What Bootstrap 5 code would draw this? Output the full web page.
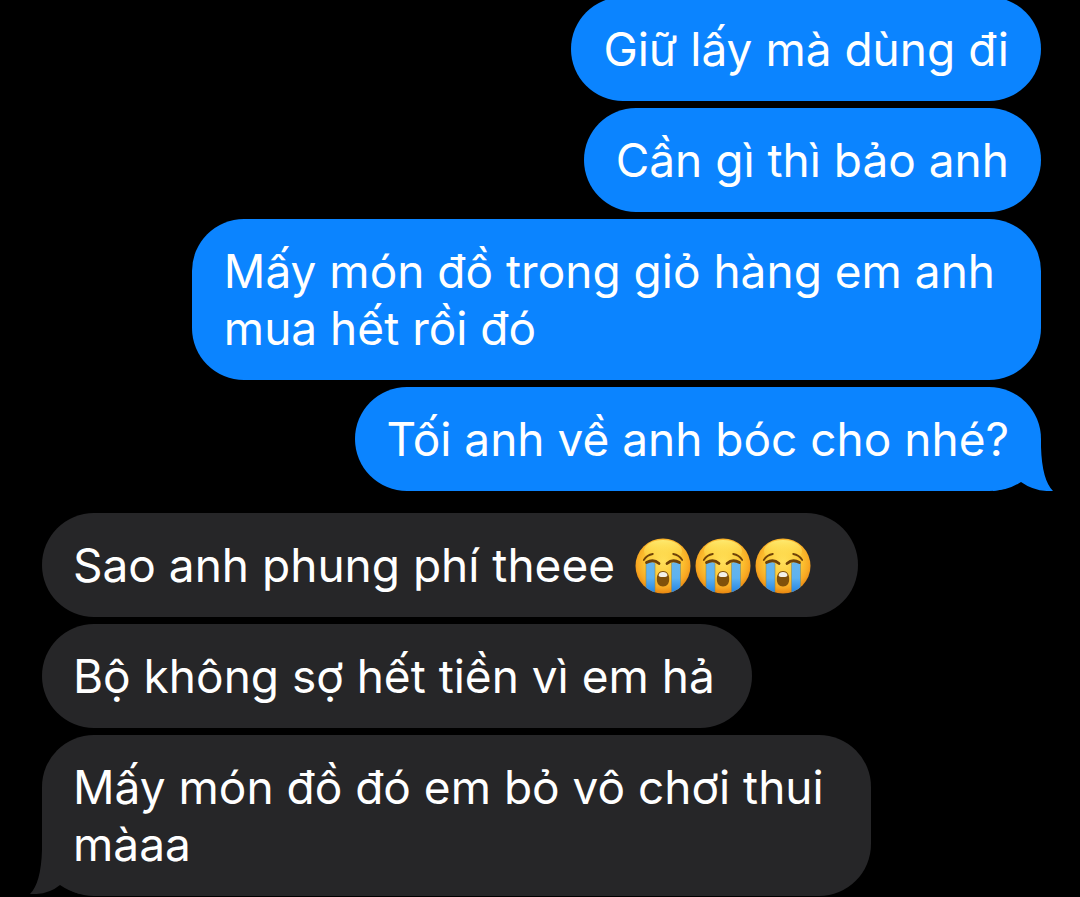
<!DOCTYPE html>
<html lang="vi" data-bs-theme="dark">
<head>
<meta charset="utf-8">
<meta name="viewport" content="width=device-width, initial-scale=1">
<title>Tin nhắn</title>
<link href="https://cdn.jsdelivr.net/npm/bootstrap@5.3.0/dist/css/bootstrap.min.css" rel="stylesheet">
<style>
  body { background: #000; color: #fff; font-family: Inter, "Noto Sans", sans-serif; }
  .thread { padding: 0 39px 1px 42px; gap: 22px; }
  .run { gap: 7px; }
  .bubble {
    padding: 24px 32px 23px;
    border-radius: 52px;
    font-size: 46px;
    line-height: 57px;
    isolation: isolate;
  }
  .sent .bubble { background: #0b84ff; max-width: 85%; }
  .received .bubble { background: #262628; max-width: 83%; padding-left: 31px; padding-right: 37px; }
  .tail { position: absolute; z-index: -1; bottom: 0; width: 60px; height: 60px; }
  .sent .tail { right: -12px; fill: #0b84ff; }
  .received .tail { left: -12px; bottom: 2px; fill: #262628; }
  .emoji { width: 60px; height: 60px; margin: -8px 0; vertical-align: -6px; }
  .emoji-row { padding: 0 8px 0 5px; }
</style>
</head>
<body>
<svg class="position-absolute" width="0" height="0" aria-hidden="true">
  <defs>
    <radialGradient id="skin" cx=".5" cy=".42" r=".58">
      <stop offset="0" stop-color="#ffe05a"/><stop offset=".55" stop-color="#fdc735"/><stop offset=".82" stop-color="#f8a823"/><stop offset="1" stop-color="#e8860f"/>
    </radialGradient>
    <linearGradient id="shine" x1="0" y1="0" x2="0" y2="1">
      <stop offset="0" stop-color="#fff27a" stop-opacity=".85"/><stop offset="1" stop-color="#ffe04a" stop-opacity="0"/>
    </linearGradient>
    <linearGradient id="tear" x1="0" y1="0" x2="0" y2="1">
      <stop offset="0" stop-color="#67b5ec"/><stop offset=".5" stop-color="#5db2f1"/><stop offset="1" stop-color="#1f7fe0"/>
    </linearGradient>
    <clipPath id="face"><circle cx="30" cy="30" r="27.5"/></clipPath>
  </defs>
  <symbol id="crying" viewBox="0 0 60 60">
    <circle cx="30" cy="30" r="27.5" fill="url(#skin)"/>
    <ellipse cx="30" cy="15" rx="19" ry="11" fill="url(#shine)"/>
    <g clip-path="url(#face)">
      <path d="M13 27q4-2 9 0v31h-9z" fill="url(#tear)"/>
      <path d="M38.500 27q5-2 9 0v31h-9z" fill="url(#tear)"/>
      <path d="M13 27v30M22 27v30M38.500 27v30M47.500 27v30" fill="none" stroke="#8a8a55" stroke-width=".8" opacity=".7"/>
    </g>
    <g fill="none" stroke="#6f4208" stroke-linecap="round">
      <path d="M10.800 24q3-5 9-6M49.200 24q-3-5-9-6" stroke-width="1.800"/>
      <path d="M13.500 26.500q7-4 12.500 1M46.500 26.500q-7-4-12.500 1" stroke-width="2.800"/>
    </g>
    <path d="M30 35c4 0 6.200 3.300 6.200 8 0 4.600-2.200 7.500-6.200 7.500s-6.200-2.900-6.200-7.500c0-4.700 2.200-8 6.200-8z" fill="#80500a"/>
    <path d="M30 36c2.500 0 4 1.200 4.500 3.200-.4 1.300-1.500 1.800-4.500 1.800s-4.100-.5-4.500-1.800c.5-2 2-3.200 4.500-3.200z" fill="#f4f1e8"/>
  </symbol>
</svg>

<main class="thread d-flex flex-column justify-content-end vh-100 overflow-hidden">
  <section class="run sent d-flex flex-column align-items-end" aria-label="Đã gửi">
    <div class="bubble">Giữ lấy mà dùng đi</div>
    <div class="bubble">Cần gì thì bảo anh</div>
    <div class="bubble">Mấy món đồ trong giỏ hàng em anh mua hết rồi đó</div>
    <div class="bubble position-relative">Tối anh về anh bóc cho nhé?
      <svg class="tail" viewBox="0 0 60 60" aria-hidden="true"><path d="M0 60Q16 59 28 51Q42 61 60 60Q49 49 48 16V8H0z"/></svg>
    </div>
  </section>
  <section class="run received d-flex flex-column align-items-start" aria-label="Đã nhận">
    <div class="bubble">Sao anh phung phí theee <span class="emoji-row text-nowrap" role="img" aria-label="mặt khóc to ba lần"><svg class="emoji"><use href="#crying"/></svg><svg class="emoji"><use href="#crying"/></svg><svg class="emoji"><use href="#crying"/></svg></span></div>
    <div class="bubble">Bộ không sợ hết tiền vì em hả</div>
    <div class="bubble position-relative">Mấy món đồ đó em bỏ vô chơi thui màaa
      <svg class="tail" viewBox="0 0 60 60" aria-hidden="true"><path d="M60 62Q43 60 30 51Q18 61 0 60Q11 49 12 16V8H60z"/></svg>
    </div>
  </section>
</main>
<script src="https://cdn.jsdelivr.net/npm/bootstrap@5.3.0/dist/js/bootstrap.bundle.min.js"></script>
</body>
</html>
